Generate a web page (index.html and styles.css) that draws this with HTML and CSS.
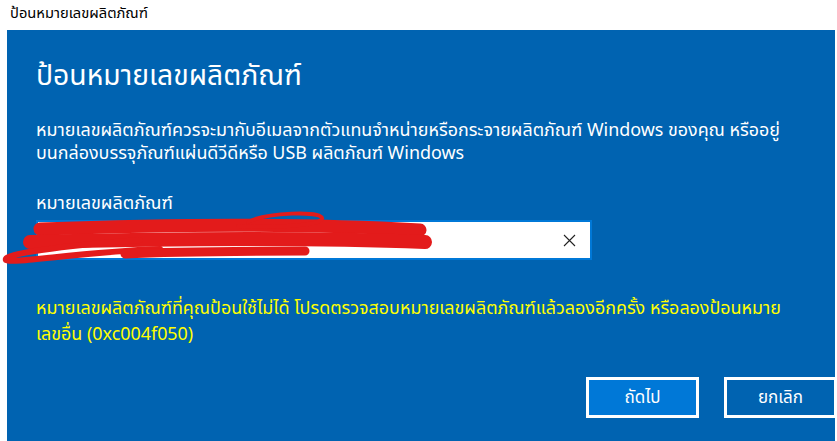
FILE: index.html
```html
<!DOCTYPE html>
<html lang="th">
<head>
<meta charset="utf-8">
<link rel="stylesheet" href="styles.css">
</head>
<body>
<div class="titlebar">ป้อนหมายเลขผลิตภัณฑ์</div>
<div class="panel">
  <h1 class="heading">ป้อนหมายเลขผลิตภัณฑ์</h1>
  <p class="desc">หมายเลขผลิตภัณฑ์ควรจะมากับอีเมลจากตัวแทนจำหน่ายหรือกระจายผลิตภัณฑ์ Windows ของคุณ หรืออยู่<br>บนกล่องบรรจุภัณฑ์แผ่นดีวีดีหรือ USB ผลิตภัณฑ์ Windows</p>
  <div class="label">หมายเลขผลิตภัณฑ์</div>
  <div class="input">
    <span class="value">XXXXX-XXXXX-XXXXX-XXXXX-XXXXX</span>
    <span class="caret"></span>
    <svg class="clear" width="13" height="13" viewBox="0 0 13 13"><path d="M1 1L12 12M12 1L1 12" stroke="#222" stroke-width="1.1" fill="none"/></svg>
  </div>
  <p class="error">หมายเลขผลิตภัณฑ์ที่คุณป้อนใช้ไม่ได้ โปรดตรวจสอบหมายเลขผลิตภัณฑ์แล้วลองอีกครั้ง หรือลองป้อนหมาย<br>เลขอื่น (0xc004f050)</p>
  <div class="actions">
    <button class="btn primary">ถัดไป</button>
    <button class="btn">ยกเลิก</button>
  </div>
</div>
<svg class="scribble" width="440" height="75" viewBox="0 0 440 75">
  <path d="M110 25 C 170 22, 240 22, 300 24" stroke="#9a9a9a" stroke-width="4" fill="none" opacity="0.8" stroke-linecap="round"/>
  <path d="M40 29 C 150 25, 300 23, 420 30" stroke="#e31b1b" stroke-width="13" fill="none" stroke-linecap="round"/>
  <path d="M30 42 C 150 39, 300 37, 425 42" stroke="#e31b1b" stroke-width="14" fill="none" stroke-linecap="round"/>
  <path d="M160 49 C 80 52, 12 64, 6 60 C 2 54, 60 46, 140 40" stroke="#e31b1b" stroke-width="6" fill="none" stroke-linecap="round"/>
  <path d="M125 54 C 180 51, 250 51, 305 51" stroke="#e31b1b" stroke-width="9" fill="none" stroke-linecap="round"/>
  <path d="M248 22 C 268 12, 320 11, 322 18 C 324 26, 270 28, 238 26" stroke="#e31b1b" stroke-width="4" fill="none" stroke-linecap="round"/>
</svg>
</body>
</html>
```
FILE: styles.css
```css
html, body {
  margin: 0;
  padding: 0;
  background: #ffffff;
  width: 837px;
  height: 441px;
  overflow: hidden;
  position: relative;
  font-family: "Segoe UI", "Noto Sans", "Noto Sans Thai", "Liberation Sans", sans-serif;
}
.titlebar {
  height: 30px;
  box-sizing: border-box;
  padding: 1px 0 0 10px;
  font-size: 14.7px;
  line-height: 22px;
  color: #000;
}
.panel {
  margin-left: 7px;
  width: 828px;
  height: 411px;
  box-sizing: border-box;
  background: #0063b1;
  padding: 24px 0 0 29px;
  color: #fff;
}
.heading {
  margin: 0;
  font-weight: normal;
  font-size: 28.3px;
  line-height: 40px;
}
.desc {
  margin: 24px 0 0 0;
  font-size: 17.9px;
  line-height: 23px;
}
.label {
  margin-top: 27px;
  font-size: 18px;
  line-height: 22px;
}
.input {
  margin-top: 7px;
  width: 556px;
  height: 40px;
  box-sizing: border-box;
  border: 2px solid #0078d7;
  background: #fff;
  display: flex;
  align-items: center;
  padding: 0 14px 0 10px;
  font-size: 15px;
}
.value {
  color: #888;
  letter-spacing: 1px;
}
.caret {
  width: 1px;
  height: 14px;
  background: #000;
  margin-left: 64px;
}
.clear {
  margin-left: auto;
}
.error {
  margin: 34px 0 0 0;
  font-size: 17.9px;
  line-height: 26px;
  color: #ffff00;
}
.actions {
  display: flex;
  justify-content: flex-end;
  gap: 25px;
  margin-top: 31px;
  margin-right: -2px;
}
.btn {
  width: 113px;
  height: 41px;
  box-sizing: border-box;
  border: 3px solid #fff;
  background: #0063b1;
  color: #fff;
  font-family: inherit;
  font-size: 17px;
  padding: 0;
}
.btn.primary {
  background: #0078d7;
}
.scribble {
  position: absolute;
  left: 0;
  top: 200px;
}
```
